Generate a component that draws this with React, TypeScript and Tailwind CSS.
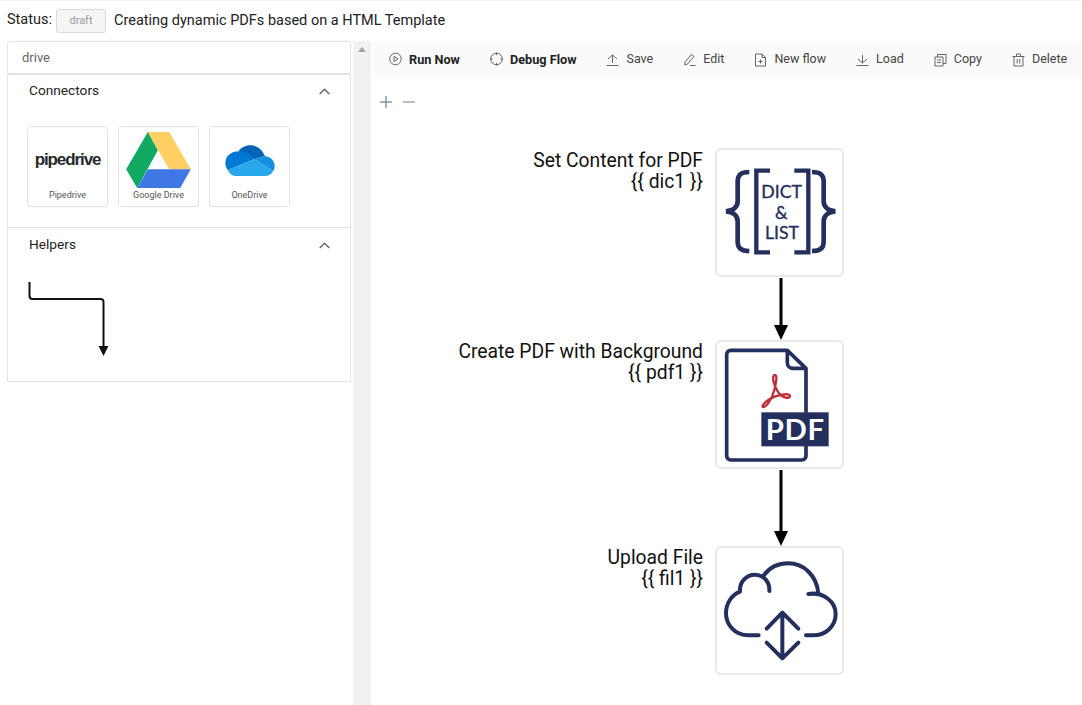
import type { ReactNode } from 'react';

const NAVY = '#232f5c';

const ToolIcon = ({ children }: { children: ReactNode }) => (
  <svg viewBox="0 0 13 14" className="w-[13px] h-[14px] shrink-0" fill="none" stroke="#555" strokeWidth="0.9">
    {children}
  </svg>
);

const toolbarItems = [
  {
    label: 'Run Now',
    bold: true,
    icon: <><circle cx="6.500" cy="7" r="5.800" /><path d="M5 4.500L9 7L5 9.500Z" /></>,
  },
  {
    label: 'Debug Flow',
    bold: true,
    icon: <><circle cx="6.500" cy="7" r="5.800" /><path d="M6.500 0.500V3M6.500 11V13.500M0 7H2.500M10.500 7H13" /></>,
  },
  {
    label: 'Save',
    icon: <path d="M2 6L6.500 2L11 6M6.500 2V10M0.500 12.500H12.500" />,
  },
  {
    label: 'Edit',
    icon: <path d="M8.500 1.500L11 3.500L4.500 11L1.800 12L2 9ZM7 12.500H12.500" />,
  },
  {
    label: 'New flow',
    icon: <path d="M1.500 1H8L11.500 4.500V13H1.500ZM8 1V4.500H11.500M6.500 6.500V10.500M4.500 8.500H8.500" />,
  },
  {
    label: 'Load',
    icon: <path d="M2 6L6.500 10L11 6M6.500 10V2M0.500 12.500H12.500" />,
  },
  {
    label: 'Copy',
    icon: <path d="M1 4H9V13H1ZM3.500 4V1.500H12V10.500H9M3 7H7M3 9.500H7" />,
  },
  {
    label: 'Delete',
    icon: <path d="M0.500 3.500H12.500M4.500 3.500V1H8.500V3.500M2 3.500V13H11V3.500M5.200 6V10.500M7.800 6V10.500" />,
  },
];

const DriveLogo = () => (
  <svg viewBox="378 395 194 168" className="w-[65px] h-[56px]">
    <polygon points="443,395 507,395 572,507 507,507" fill="#ffcf63" />
    <polygon points="443,395 473,450 411,563 378,507" fill="#11a861" />
    <polygon points="411,563 443,507 572,507 540,563" fill="#3f77e4" />
  </svg>
);

const OneDriveLogo = () => (
  <svg viewBox="343 72 148 96" className="w-[50px] h-[32px]">
    <path d="M383 92C395 75 440 60 462 108L430 118Z" fill="#0364b8" />
    <path d="M343 130C343 105 365 90 395 95C412 98 425 108 430 118L350 150C345 143 343 136 343 130Z" fill="#0078d4" />
    <path d="M462 108C480 110 491 125 491 138C491 145 489 150 487 153L430 118Z" fill="#1490df" />
    <path d="M350 150L430 118L487 153C482 163 472 168 462 168H375C362 168 355 160 350 150Z" fill="#28a8ea" />
  </svg>
);

const PipedriveLogo = () => (
  <span className="font-['Liberation_Sans',sans-serif] font-bold text-[17px] leading-none tracking-[-1.100px] text-[#26292c] -mt-[2px]">
    pipedrive
  </span>
);

const ConnectorCard = ({ label, children }: { label: string; children: ReactNode }) => (
  <div className="w-[81px] h-[81px] rounded border border-[#e2e2e2] flex flex-col items-center pt-[5px]">
    <div className="h-[56px] w-full flex items-center justify-center">{children}</div>
    <div className="mt-[1px] text-[9px] leading-[12px] text-[#555] whitespace-nowrap">{label}</div>
  </div>
);

const SectionHeader = ({ title, textClass = '', chevronClass = '' }: { title: string; textClass?: string; chevronClass?: string }) => (
  <div className="flex items-center justify-between pl-[21px] pr-[20px] h-[32px]">
    <span className={`text-[13.700px] text-[#222] ${textClass}`}>{title}</span>
    <svg viewBox="0 0 11 7" className={`w-[11px] h-[7px] ${chevronClass}`} fill="none" stroke="#666" strokeWidth="1.500">
      <path d="M0.700 6L5.500 1.200L10.300 6" />
    </svg>
  </div>
);

const DictIcon = () => (
  <svg viewBox="45 25 387 387" className="block -m-[2px] w-[129px] h-[129px]" fill="none" stroke={NAVY}>
    <path d="M210 93H169V338H210M283 93H325V338H283" strokeWidth="13" />
    <path d="M148 97C122 97 113 107 113 124V185C113 202 100 213 78 215C100 217 113 228 113 245V306C113 324 122 334 148 334" strokeWidth="14" />
    <path d="M336 97C362 97 371 107 371 124V185C371 202 384 213 406 215C384 217 371 228 371 245V306C371 324 362 334 336 334" strokeWidth="14" />
    <g fill={NAVY} stroke={NAVY} strokeWidth="1" textAnchor="middle" fontFamily="Lato, sans-serif" fontSize="53">
      <text x="245" y="174">DICT</text>
      <text x="244" y="237">&amp;</text>
      <text x="246" y="298">LIST</text>
    </g>
  </svg>
);

const PdfIcon = () => (
  <svg viewBox="45 30 387 387" className="block -m-[2px] w-[129px] h-[129px]" fill="none" stroke={NAVY}>
    <path d="M262 61H92A12 12 0 0 0 80 73V378A12 12 0 0 0 92 390H306A12 12 0 0 0 318 378V348M318 248V115L262 61V98A17 17 0 0 0 279 115H318" strokeWidth="11" strokeLinejoin="round" />
    <path d="M225 135C215 135 218 162 235 187C247 205 270 207 270 198C270 188 230 193 208 208C193 218 183 230 190 231C198 232 215 210 223 180C228 160 233 135 225 135Z" stroke="#bd2f3a" strokeWidth="7" />
    <rect x="184" y="247" width="202" height="102" fill={NAVY} stroke="none" />
    <text x="286" y="331" fill="#fff" stroke="none" textAnchor="middle" fontFamily="Lato, sans-serif" fontWeight="700" fontSize="88" letterSpacing="2">PDF</text>
  </svg>
);

const CloudIcon = () => (
  <svg viewBox="45 48 387 387" className="block -m-[2px] w-[129px] h-[129px]" fill="none" stroke={NAVY} strokeWidth="12" strokeLinecap="round" strokeLinejoin="round">
    <path d="M176 316H145C105 316 78 285 78 250C78 220 95 195 120 185C118 155 140 134 165 134C190 134 210 155 208 183" />
    <path d="M192 135C215 105 240 100 265 100C310 100 350 135 355 190" />
    <path d="M325 192C370 185 407 215 407 252C407 290 375 316 340 316H318" />
    <path d="M247 250V385M200 296L247 248L295 296M200 338L247 385L295 338" />
  </svg>
);

const FlowNode = ({ title, refName, className, labelClass, children }: { title: string; refName: string; className: string; labelClass: string; children: ReactNode }) => (
  <div className={`absolute left-0 flex items-start ${className}`}>
    <div className={`w-[341px] pr-[12px] text-right text-[19.300px] leading-[21px] text-[#111] ${labelClass}`}>
      <div>{title}</div>
      <div>{refName}</div>
    </div>
    <div className="w-[129px] h-[129px] rounded-md border-2 border-[#e9e9e9] bg-white shrink-0">{children}</div>
  </div>
);

export default function App() {
  return (
    <div className="h-[705px] w-[1082px] overflow-hidden bg-white font-['Roboto',sans-serif] text-[14.500px] text-[#222] border-t border-[#f2f2f2]">
      <div className="flex items-center h-[40px] pl-[7px]">
        <span className="-mt-[2px]">Status:</span>
        <span className="ml-[4px] w-[50px] h-[24px] rounded-[3px] border border-[#d9d9d9] bg-[#f5f5f5] text-[11px] text-[#999] flex items-center justify-center">
          draft
        </span>
        <span className="ml-[8px]">Creating dynamic PDFs based on a HTML Template</span>
      </div>

      <div className="flex h-[664px]">
        <div className="w-[344px] ml-[7px] shrink-0">
          <div className="h-[33px] rounded-[3px] border border-[#e2e2e2] flex items-center pl-[14px] text-[13px] text-[#666]">drive</div>
          <div className="border border-[#e2e2e2] h-[308px]">
            <div className="h-[153px] border-b border-[#e2e2e2]">
              <SectionHeader title="Connectors" textClass="-mt-[2px]" />
              <div className="flex gap-[10px] pl-[19px] pt-[19px]">
                <ConnectorCard label="Pipedrive"><PipedriveLogo /></ConnectorCard>
                <ConnectorCard label="Google Drive"><DriveLogo /></ConnectorCard>
                <ConnectorCard label="OneDrive"><OneDriveLogo /></ConnectorCard>
              </div>
            </div>
            <SectionHeader title="Helpers" chevronClass="mt-[2px]" />
            <svg viewBox="0 0 90 90" className="ml-[17px] mt-[17px] w-[90px] h-[90px]" fill="none">
              <path d="M4.500 5V19Q4.500 22 7.500 22H75.500Q78.500 22 78.500 25V70" stroke="#111" strokeWidth="2" />
              <polygon points="73.500,69 83.500,69 78.500,79" fill="#111" />
            </svg>
          </div>
        </div>

        <div className="ml-[2px] w-[18px] shrink-0 bg-[#f1f1f1] flex justify-center pt-[6px]">
          <div className="w-0 h-0 border-x-[4px] border-x-transparent border-b-[5px] border-b-[#a3a3a3]" />
        </div>

        <div className="relative flex-1 ml-[3px]">
          <div className="flex h-[37px] items-center bg-[#fafafa] text-[12.500px] text-[#444] pl-[15px] whitespace-nowrap">
            {toolbarItems.map(({ label, icon, bold }) => (
              <div key={label} className={`flex items-center gap-[7px] mr-[30px] ${bold ? 'font-bold text-[12.700px] text-[#222]' : ''}`}>
                <ToolIcon>{icon}</ToolIcon>
                <span>{label}</span>
              </div>
            ))}
          </div>
          <div className="flex items-center gap-[11px] pl-[6px] pt-[18px]">
            <svg viewBox="0 0 12 12" className="w-[12px] h-[12px]" stroke="#4d6478"><path d="M6 0V12M0 6H12" /></svg>
            <svg viewBox="0 0 12 12" className="w-[12px] h-[12px]" stroke="#777"><path d="M0 6H12" /></svg>
          </div>

          <FlowNode title="Set Content for PDF" refName="{{ dic1 }}" className="top-[107px]" labelClass="pt-[2px]"><DictIcon /></FlowNode>
          <FlowNode title="Create PDF with Background" refName="{{ pdf1 }}" className="top-[299px]" labelClass="pt-[1px]"><PdfIcon /></FlowNode>
          <FlowNode title="Upload File" refName="{{ fil1 }}" className="top-[505px]" labelClass="pt-[1px]"><CloudIcon /></FlowNode>

          <svg viewBox="0 0 20 270" className="absolute left-[397px] top-[236px] w-[20px] h-[270px]">
            <path d="M10 1V50M10 193V255" stroke="#000" strokeWidth="3" />
            <polygon points="3,48 17,48 10,63" fill="#000" />
            <polygon points="3,254 17,254 10,269" fill="#000" />
          </svg>
        </div>
      </div>
    </div>
  );
}
